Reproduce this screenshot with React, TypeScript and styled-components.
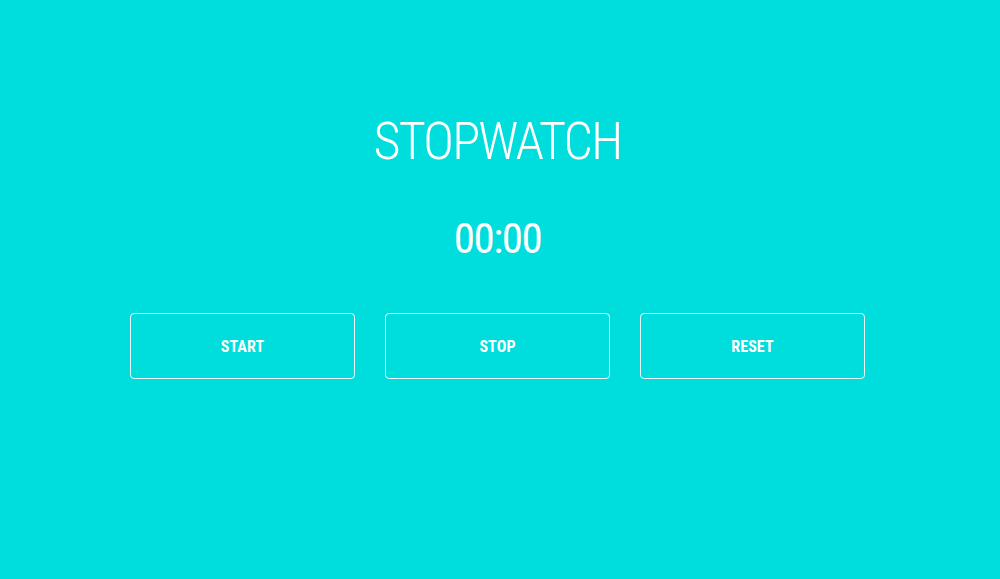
import React from "react";
import styled, { createGlobalStyle } from "styled-components";

const Global = createGlobalStyle`
  html, body { margin: 0; padding: 0; background: #00dddd; }
  body { font-family: "Roboto Condensed", Roboto, "Liberation Sans", sans-serif; color: #fff; }
`;

const Page = styled.main`
  width: 995px;
  min-height: 579px;
  display: flex;
  flex-direction: column;
  align-items: center;
  padding-top: 111px;
  box-sizing: border-box;
`;

const Title = styled.h1`
  margin: 0;
  font-weight: 300;
  font-size: 52px;
  line-height: 62px;
  letter-spacing: -1.8px;
`;

const Time = styled.div`
  margin-top: 39px;
  font-weight: 400;
  font-size: 43px;
  line-height: 52px;
  letter-spacing: -1.5px;
`;

const Controls = styled.div`
  margin-top: 49px;
  display: flex;
  gap: 30px;
`;

const Button = styled.button`
  width: 225px;
  height: 66px;
  background: transparent;
  border: 1px solid rgba(255, 255, 255, 0.9);
  border-radius: 4px;
  color: #fff;
  font-family: "Roboto Condensed", Roboto, "Liberation Sans", sans-serif;
  font-weight: 700;
  font-size: 16px;
  letter-spacing: 0.1px;
  cursor: pointer;
`;

export default function App() {
  return (
    <>
      <Global />
      <Page>
        <Title>STOPWATCH</Title>
        <Time>00:00</Time>
        <Controls>
          <Button>START</Button>
          <Button>STOP</Button>
          <Button>RESET</Button>
        </Controls>
      </Page>
    </>
  );
}
